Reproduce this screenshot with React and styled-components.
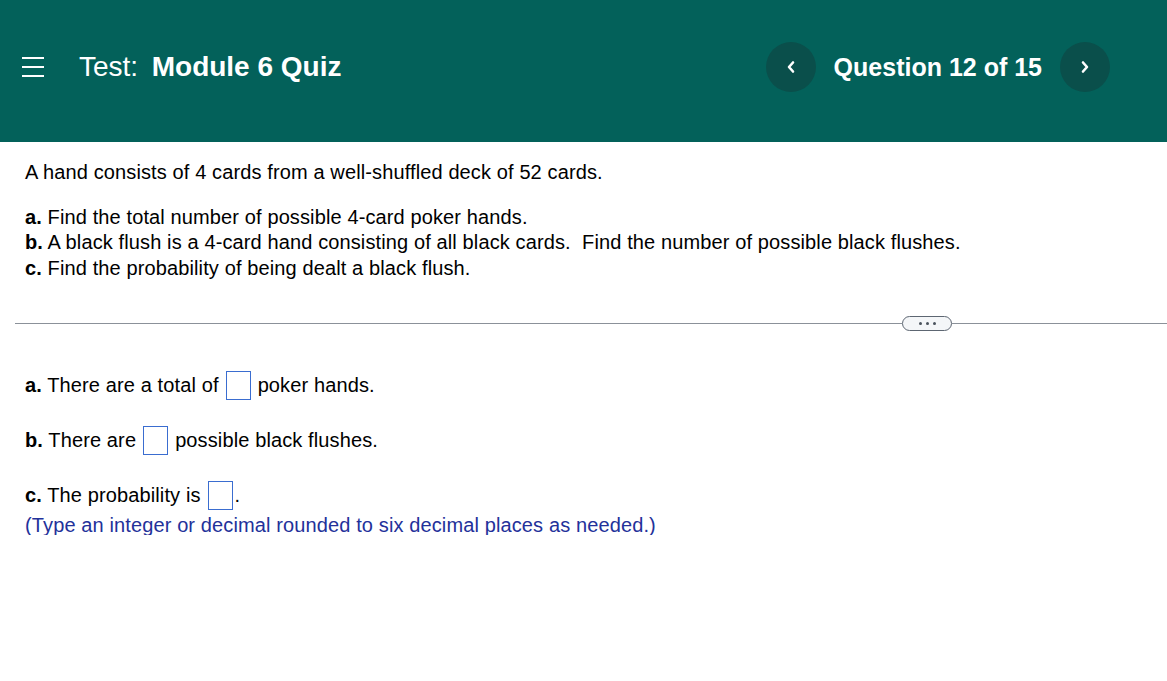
import React from "react";
import styled, { createGlobalStyle } from "styled-components";

const Global = createGlobalStyle`
  html, body { margin: 0; padding: 0; background: #fff; }
  body { font-family: "Liberation Sans", Arial, sans-serif; color: #000; }
`;

const Header = styled.header`
  height: 142px;
  background: #03615a;
  display: flex;
  align-items: center;
  padding: 0 57px 8px 22px;
  box-sizing: border-box;
  color: #fff;
`;

const Burger = styled.button`
  width: 22px;
  height: 20px;
  padding: 0;
  border: 0;
  background: transparent;
  display: flex;
  flex-direction: column;
  justify-content: space-between;
  cursor: pointer;
  span {
    display: block;
    height: 2px;
    background: #fff;
  }
`;

const Title = styled.h1`
  margin: 0 0 0 35px;
  font-size: 28px;
  font-weight: 400;
  white-space: pre;
  b { font-weight: 700; margin-left: -2px; }
`;

const Nav = styled.nav`
  margin-left: auto;
  display: flex;
  align-items: center;
  gap: 18px;
`;

const NavButton = styled.button`
  width: 50px;
  height: 50px;
  border-radius: 50%;
  border: 0;
  background: #0a4f4b;
  display: flex;
  align-items: center;
  justify-content: center;
  padding: 0;
  cursor: pointer;
`;

const QuestionLabel = styled.div`
  font-size: 25px;
  font-weight: 700;
`;

const Content = styled.main`
  padding: 18px 0 0 25px;
  font-size: 20px;
  letter-spacing: 0.12px;
  line-height: 25.5px;
  white-space: pre-wrap;
`;

const Para = styled.p`
  margin: 0 0 19px;
`;

const Line = styled.div``;

const Sep = styled.div`
  display: flex;
  align-items: center;
  margin: 35px 0 0 -10px;
`;

const Rule = styled.div`
  height: 1px;
  background: #8b9199;
  width: ${(p) => (p.$grow ? "auto" : p.$w + "px")};
  flex: ${(p) => (p.$grow ? "1" : "none")};
`;

const Pill = styled.button`
  width: 50px;
  height: 15px;
  box-sizing: border-box;
  border: 1px solid #5d6672;
  border-radius: 8px;
  background: #f4f6f8;
  display: flex;
  align-items: center;
  justify-content: center;
  gap: 4px;
  padding: 0;
  span {
    width: 3px;
    height: 3px;
    border-radius: 50%;
    background: #4a525c;
  }
`;

const Answers = styled.div`
  padding: 40px 0 0 25px;
  font-size: 20px;
  letter-spacing: 0.12px;
`;

const Row = styled.div`
  display: flex;
  align-items: center;
  gap: 7px;
  height: 29px;
  margin-bottom: ${(p) => p.$mb ?? 26}px;
  white-space: pre;
`;

const Box = styled.span`
  display: inline-block;
  width: 25px;
  height: 29px;
  box-sizing: border-box;
  border: 1px solid #3a6dd0;
  background: #fff;
`;

const Period = styled.span`
  margin-left: -5px;
`;

const Hint = styled.div`
  color: #23319a;
  line-height: 20px;
`;

const Chevron = ({ dir }) => (
  <svg width="12" height="14" viewBox="0 0 12 14">
    <path
      d={dir === "left" ? "M8 2.5 L4 7 L8 11.5" : "M4 2.5 L8 7 L4 11.5"}
      fill="none"
      stroke="#fff"
      strokeWidth="2.6"
      strokeLinecap="round"
      strokeLinejoin="round"
    />
  </svg>
);

export default function App() {
  return (
    <>
      <Global />
      <Header>
        <Burger aria-label="menu">
          <span />
          <span />
          <span />
        </Burger>
        <Title>
          Test:  <b>Module 6 Quiz</b>
        </Title>
        <Nav>
          <NavButton aria-label="previous">
            <Chevron dir="left" />
          </NavButton>
          <QuestionLabel>Question 12 of 15</QuestionLabel>
          <NavButton aria-label="next">
            <Chevron dir="right" />
          </NavButton>
        </Nav>
      </Header>
      <Content>
        <Para>A hand consists of 4 cards from a well-shuffled deck of 52 cards.</Para>
        <div>
          <Line>
            <b>a.</b> Find the total number of possible 4-card poker hands.
          </Line>
          <Line>
            <b>b.</b> A black flush is a 4-card hand consisting of all black cards.  Find the number of possible black flushes.
          </Line>
          <Line>
            <b>c.</b> Find the probability of being dealt a black flush.
          </Line>
        </div>
        <Sep>
          <Rule $w={887} />
          <Pill aria-label="more">
            <span />
            <span />
            <span />
          </Pill>
          <Rule $grow />
        </Sep>
      </Content>
      <Answers>
        <Row>
          <span>
            <b>a.</b> There are a total of
          </span>
          <Box />
          <span>poker hands.</span>
        </Row>
        <Row>
          <span>
            <b>b.</b> There are
          </span>
          <Box />
          <span>possible black flushes.</span>
        </Row>
        <Row $mb={5}>
          <span>
            <b>c.</b> The probability is
          </span>
          <Box />
          <Period>.</Period>
        </Row>
        <Hint>(Type an integer or decimal rounded to six decimal places as needed.)</Hint>
      </Answers>
    </>
  );
}
